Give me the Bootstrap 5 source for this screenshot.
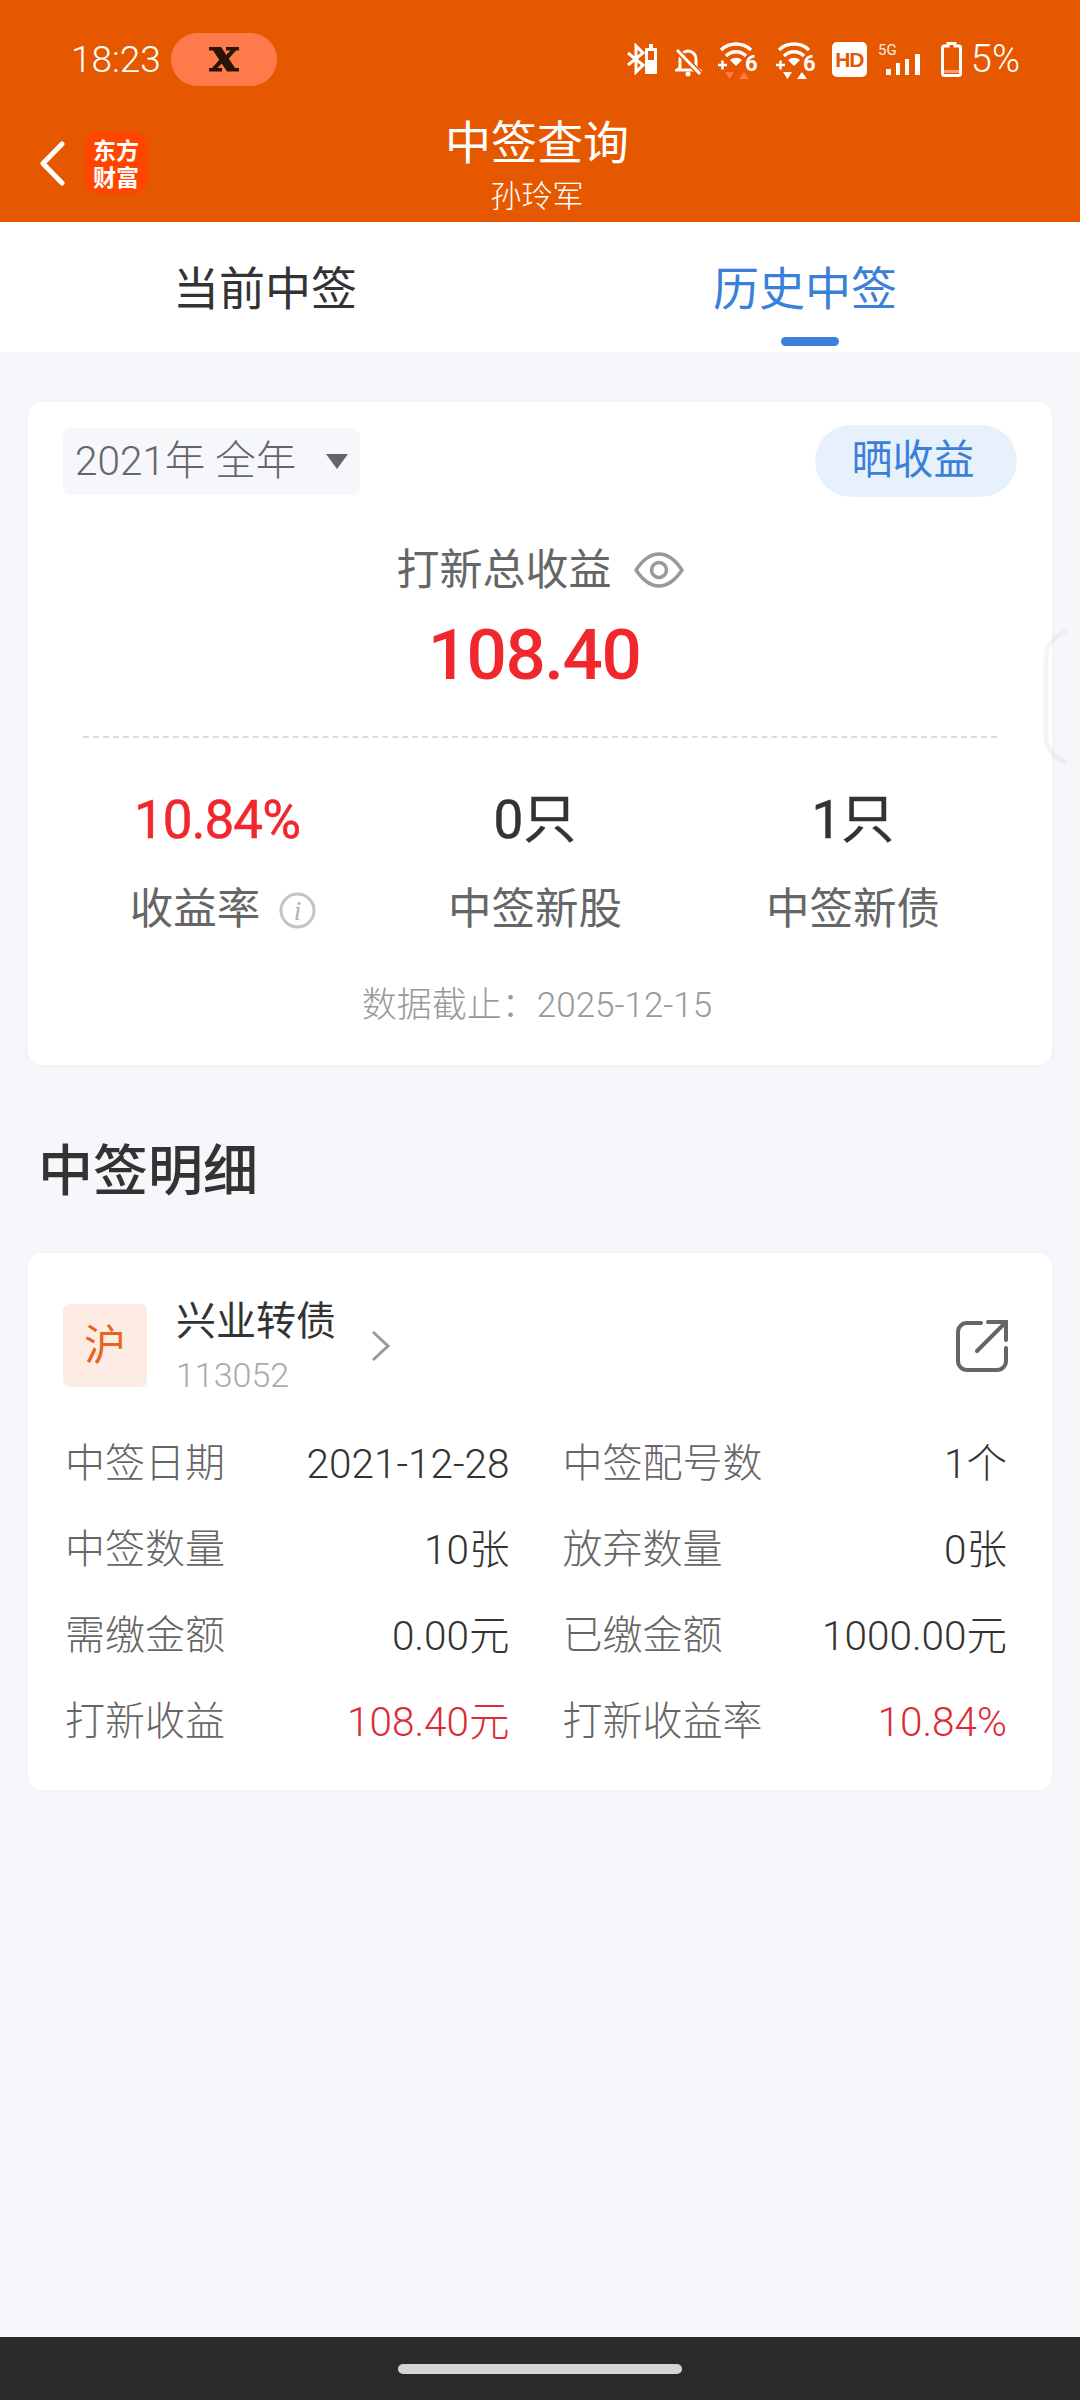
<!DOCTYPE html>
<html lang="zh-CN">
<head>
<meta charset="UTF-8">
<meta name="viewport" content="width=device-width, initial-scale=1.0">
<title>中签查询</title>
<link href="https://cdn.jsdelivr.net/npm/bootstrap@5.3.0/dist/css/bootstrap.min.css" rel="stylesheet">
<style>
    html, body { height: 2400px; }
    body {
        width: 1080px;
        background-color: #f6f7fa;
        font-family: Roboto, "Noto Sans CJK SC", sans-serif;
        color: #333;
    }
    .app-head { background-color: #e65800; color: #fff; height: 222px; }
    .status-bar { height: 110px; padding: 33px 60px 24px 71px; }
    .status-time { font-size: 37px; line-height: 53px; width: 100px; font-weight: 300; }
    .status-pill { width: 106px; height: 53px; background-color: #ff7a4a; border-radius: 27px; }
    .status-icons svg { display: block; }
    .status-pct { font-size: 38px; line-height: 53px; font-weight: 300; margin-left: 9px; }
    .hd-tag {
        width: 35px; height: 35px; background: #fff; color: #e65800; border-radius: 5px;
        font: 700 21px/35px "Liberation Sans", sans-serif; text-align: center; letter-spacing: -1px;
    }
    .head-row { height: 112px; display: grid; grid-template-columns: 1fr auto 1fr; }
    .back-side { padding: 22px 0 0 39px; gap: 20px; }
    .app-logo {
        width: 62px; height: 62px; background-color: #ff4500; border-radius: 14px;
        font-size: 23px; line-height: 27px; font-weight: 700; text-align: center; padding-top: 6px;
    }
    .head-mid { padding-right: 6px; }
    .head-title { font-size: 46px; line-height: 62px; padding-top: 2px; text-align: center; }
    .head-sub { font-size: 31px; line-height: 40px; text-align: center; margin-top: 3px; font-weight: 300; }

    .tab-bar { height: 130px; background: #fff; }
    .tab-item { position: relative; height: 130px; font-size: 46px; line-height: 135px; text-align: center; padding-right: 10px; color: #333; }
    .tab-on { color: #3b80d8; }
    .tab-on::after {
        content: ""; position: absolute; left: 241px; bottom: 6px;
        width: 58px; height: 9px; border-radius: 5px; background: #3b80d8;
    }

    .panel { background: #fff; border-radius: 14px; margin: 0 28px; box-shadow: 0 0 6px rgba(0, 0, 0, .03); }
    .panel-total { margin-top: 50px; height: 663px; padding: 23px 35px 0 35px; position: relative; }
    .year-pick {
        width: 297px; height: 67px; background: #f5f7fa; border-radius: 8px; padding: 0 12px;
        font-size: 40.500px; color: #666; font-weight: 300;
    }
    .year-arrow { width: 0; height: 0; border-left: 11px solid transparent; border-right: 11px solid transparent; border-top: 15px solid #666; }
    .share-gain {
        width: 202px; height: 72px; border: 0; border-radius: 36px; padding: 0 6px 2px 0;
        background: #e7f1fb; color: #3b80d8; font-size: 41px; line-height: 70px;
    }
    .total-label { font-size: 43px; line-height: 60px; color: #666; margin-top: 43px; gap: 22px; }
    .total-num { font-size: 71px; line-height: 84px; font-weight: 500; color: #f0282d; letter-spacing: -1.5px; text-align: center; margin-top: 13px; padding-right: 12px; }
    .dash-line { border-top: 2px dashed #dcdcdc; margin: 39px 20px 0 20px; }
    .stat-row { margin: 50px 5px 0 -5px; }
    .stat-num { font-size: 53px; line-height: 64px; font-weight: 400; text-align: center; color: #333; -webkit-text-stroke: .5px currentColor; }
    .stat-red { color: #f0282d; letter-spacing: -1px; }
    .stat-name { font-size: 43.500px; line-height: 60px; color: #666; margin-top: 28px; gap: 19px; }
    .stat-first { padding-left: 12px; }
    .data-date { font-size: 35px; line-height: 46px; color: #999; text-align: center; margin-top: 43px; font-weight: 300; padding-right: 6px; }
    .side-handle { position: absolute; left: 1015px; top: 227px; }

    .sec-title { font-size: 55px; line-height: 70px; font-weight: 500; margin: 71px 0 0 38px; color: #333; }
    .panel-detail { margin-top: 47px; height: 537px; padding: 51px 45px 0 37px; }
    .market-tag {
        width: 84px; height: 83px; margin-left: -2px; background: #fdece3; color: #e6641e; border-radius: 6px;
        font-size: 42px; line-height: 83px; text-align: center;
    }
    .bond-head { height: 83px; }
    .bond-text { margin-left: 29px; }
    .bond-name { font-size: 40px; line-height: 56px; color: #333; margin-top: -10px; }
    .bond-code { font-size: 34px; line-height: 42px; color: #aaa; font-weight: 300; margin-top: 4px; }
    .bond-more { margin: 0 0 0 35px; }
    .bond-send { margin-right: -3px; }
    .detail-grid { --bs-gutter-x: 53px; --bs-gutter-y: 0; margin-top: 34px; }
    .detail-cell { height: 86px; font-size: 40.500px; line-height: 86px; font-weight: 300; }
    .detail-key { color: #666; font-size: 40px; }
    .detail-val { color: #333; }
    .detail-red { color: #dc2b35; }

    .app-foot { height: 63px; background: #2a2a2a; }
    .foot-pill { width: 284px; height: 10px; border-radius: 5px; background: #d4d4d4; margin-top: 27px; }
</style>
</head>
<body class="d-flex flex-column">
    <header class="app-head">
        <div class="status-bar d-flex justify-content-between">
            <div class="d-flex">
                <div class="status-time">18:23</div>
                <div class="status-pill d-flex align-items-center justify-content-center">
                    <svg width="30" height="25" viewBox="0 0 30 25">
                        <path d="M0 0h12l14 21h4v3.500H18L4 3.500H0z" fill="#2a1408"/>
                        <path d="M17 0h13v3.500h-3l-8 9-2.500-3.800 5-5.200h-4.500zM13 24.500H0V21h3l8-9 2.500 3.800-5 5.200H13z" fill="#2a1408"/>
                    </svg>
                </div>
            </div>
            <div class="status-icons d-flex align-items-start">
                <svg width="30" height="32" viewBox="0 0 30 32" style="margin-top:10px">
                    <path d="M1 10l15 12-7 7V3l7 7L1 22" fill="none" stroke="#fff" stroke-width="3"/>
                    <path d="M19 5h3V1h4v4h3a1 1 0 0 1 1 1v24a1 1 0 0 1-1 1h-10a1 1 0 0 1-1-1V6a1 1 0 0 1 1-1z" fill="#fff"/>
                    <rect x="21" y="8" width="6" height="9" fill="#e65800"/>
                </svg>
                <svg width="27" height="30" viewBox="0 0 27 30" style="margin:14px 0 0 18px">
                    <path d="M5 21V12a8 8 0 0 1 8-8 8 8 0 0 1 8 8v9l3 2H2z" fill="none" stroke="#fff" stroke-width="3"/>
                    <path d="M2 3l23 24" stroke="#e65800" stroke-width="6"/>
                    <path d="M2 3l23 24" stroke="#fff" stroke-width="3"/>
                    <circle cx="13" cy="27" r="2.500" fill="#fff"/>
                </svg>
                <svg width="42" height="40" viewBox="0 0 42 40" style="margin:8px 0 0 15px">
                    <path d="M4 9a22 22 0 0 1 30 0M9 15a14 14 0 0 1 20 0" fill="none" stroke="#fff" stroke-width="3.500"/>
                    <path d="M13 19a9 9 0 0 1 12 0l-6 6z" fill="#fff"/>
                    <path d="M1 24h9M5.500 19.500v9" stroke="#fff" stroke-width="2.500"/>
                    <text x="28" y="30" font-family="Roboto, sans-serif" font-weight="700" font-size="22" fill="#fff">6</text>
                    <path d="M8 31h9l-4.500 7zM22 38h10l-5-7z" fill="#ff7a4a"/>
                </svg>
                <svg width="42" height="40" viewBox="0 0 42 40" style="margin:8px 0 0 16px">
                    <path d="M4 9a22 22 0 0 1 30 0M9 15a14 14 0 0 1 20 0" fill="none" stroke="#fff" stroke-width="3.500"/>
                    <path d="M13 19a9 9 0 0 1 12 0l-6 6z" fill="#fff"/>
                    <path d="M1 24h9M5.500 19.500v9" stroke="#fff" stroke-width="2.500"/>
                    <text x="28" y="30" font-family="Roboto, sans-serif" font-weight="700" font-size="22" fill="#fff">6</text>
                    <path d="M8 31h9l-4.500 7zM22 38h10l-5-7z" fill="#fff"/>
                </svg>
                <div class="hd-tag" style="margin:9px 0 0 15px">HD</div>
                <svg width="48" height="36" viewBox="0 0 48 36" style="margin:8px 0 0 11px">
                    <text x="0" y="14" font-family="Roboto, sans-serif" font-size="15" fill="#fff" opacity=".9">5G</text>
                    <rect x="8" y="28" width="5" height="6" fill="#fff"/>
                    <rect x="18" y="22" width="4" height="12" fill="#fff"/>
                    <rect x="27" y="18" width="4" height="16" fill="#fff"/>
                    <rect x="37" y="13" width="5" height="21" fill="#fff"/>
                </svg>
                <svg width="21" height="35" viewBox="0 0 21 35" style="margin:9px 0 0 15px">
                    <path d="M7 1.500h7V4h4a1.500 1.500 0 0 1 1.500 1.500v26a2 2 0 0 1-2 2h-14a2 2 0 0 1-2-2v-26A1.500 1.500 0 0 1 3 4h4z" fill="none" stroke="#fff" stroke-width="3"/>
                    <rect x="3" y="28" width="15" height="3" fill="#ff9a70"/>
                </svg>
                <div class="status-pct">5%</div>
            </div>
        </div>
        <div class="head-row">
            <div class="back-side d-flex align-items-start">
                <svg width="26" height="45" viewBox="0 0 26 45" style="margin-top:9px">
                    <path d="M23 3L4 22.500 23 42" fill="none" stroke="#fff" stroke-width="5" stroke-linecap="round" stroke-linejoin="round"/>
                </svg>
                <div class="app-logo">东方<br>财富</div>
            </div>
            <div class="head-mid">
                <div class="head-title">中签查询</div>
                <div class="head-sub">孙玲军</div>
            </div>
            <div></div>
        </div>
    </header>

    <nav class="tab-bar row g-0">
        <div class="col-6 tab-item">当前中签</div>
        <div class="col-6 tab-item tab-on">历史中签</div>
    </nav>

    <main class="flex-grow-1">
        <section class="panel panel-total">
            <div class="d-flex justify-content-between align-items-center">
                <div class="year-pick d-flex justify-content-between align-items-center">
                    <span>2021年 全年</span>
                    <span class="year-arrow"></span>
                </div>
                <button type="button" class="btn share-gain">晒收益</button>
            </div>
            <div class="total-label d-flex justify-content-center align-items-center">
                <span>打新总收益</span>
                <svg width="50" height="38" viewBox="0 0 50 38">
                    <path d="M2 19C10 7 17 3 25 3s15 4 23 16c-8 12-15 16-23 16S10 31 2 19z" fill="none" stroke="#999" stroke-width="3.500" stroke-linejoin="round"/>
                    <circle cx="25" cy="19" r="7.500" fill="none" stroke="#999" stroke-width="3.500"/>
                </svg>
            </div>
            <div class="total-num">108.40</div>
            <div class="dash-line"></div>
            <div class="stat-row row g-0">
                <div class="col-4">
                    <div class="stat-num stat-red">10.84%</div>
                    <div class="stat-name stat-first d-flex justify-content-center align-items-center">
                        <span>收益率</span>
                        <svg width="37" height="37" viewBox="0 0 37 37">
                            <circle cx="18.500" cy="18.500" r="16.500" fill="none" stroke="#c4c4c4" stroke-width="3"/>
                            <text x="18.500" y="28" text-anchor="middle" font-family="Liberation Serif, serif" font-style="italic" font-size="27" fill="#b0b0b0">i</text>
                        </svg>
                    </div>
                </div>
                <div class="col-4">
                    <div class="stat-num">0只</div>
                    <div class="stat-name text-center">中签新股</div>
                </div>
                <div class="col-4">
                    <div class="stat-num">1只</div>
                    <div class="stat-name text-center">中签新债</div>
                </div>
            </div>
            <div class="data-date">数据截止：2025-12-15</div>
            <svg class="side-handle" width="24" height="136" viewBox="0 0 24 136">
                <path d="M22 3C8 9 3 18 3 30v76c0 12 5 21 19 27" fill="none" stroke="#000" stroke-opacity=".04" stroke-width="5" stroke-linecap="round"/>
            </svg>
        </section>

        <h2 class="sec-title">中签明细</h2>

        <section class="panel panel-detail">
            <div class="bond-head d-flex align-items-start">
                <div class="market-tag">沪</div>
                <div class="bond-text">
                    <div class="bond-name">兴业转债</div>
                    <div class="bond-code">113052</div>
                </div>
                <svg class="bond-more align-self-center" width="20" height="32" viewBox="0 0 20 32">
                    <path d="M2 2l15 14L2 30" fill="none" stroke="#999" stroke-width="3"/>
                </svg>
                <svg class="bond-send ms-auto align-self-center" width="56" height="56" viewBox="0 0 56 56">
                    <path d="M27 5H13a9 9 0 0 0-9 9v29a9 9 0 0 0 9 9h30a9 9 0 0 0 9-9V30" fill="none" stroke="#666" stroke-width="4" stroke-linecap="round"/>
                    <path d="M23 33L51 5M34 4h18v18" fill="none" stroke="#666" stroke-width="4" stroke-linecap="round"/>
                </svg>
            </div>
            <div class="detail-grid row">
                <div class="col-6"><div class="detail-cell d-flex justify-content-between"><span class="detail-key">中签日期</span><span class="detail-val">2021-12-28</span></div></div>
                <div class="col-6"><div class="detail-cell d-flex justify-content-between"><span class="detail-key">中签配号数</span><span class="detail-val">1个</span></div></div>
                <div class="col-6"><div class="detail-cell d-flex justify-content-between"><span class="detail-key">中签数量</span><span class="detail-val">10张</span></div></div>
                <div class="col-6"><div class="detail-cell d-flex justify-content-between"><span class="detail-key">放弃数量</span><span class="detail-val">0张</span></div></div>
                <div class="col-6"><div class="detail-cell d-flex justify-content-between"><span class="detail-key">需缴金额</span><span class="detail-val">0.00元</span></div></div>
                <div class="col-6"><div class="detail-cell d-flex justify-content-between"><span class="detail-key">已缴金额</span><span class="detail-val">1000.00元</span></div></div>
                <div class="col-6"><div class="detail-cell d-flex justify-content-between"><span class="detail-key">打新收益</span><span class="detail-red">108.40元</span></div></div>
                <div class="col-6"><div class="detail-cell d-flex justify-content-between"><span class="detail-key">打新收益率</span><span class="detail-red">10.84%</span></div></div>
            </div>
        </section>
    </main>

    <footer class="app-foot d-flex justify-content-center">
        <div class="foot-pill"></div>
    </footer>
</body>
</html>
